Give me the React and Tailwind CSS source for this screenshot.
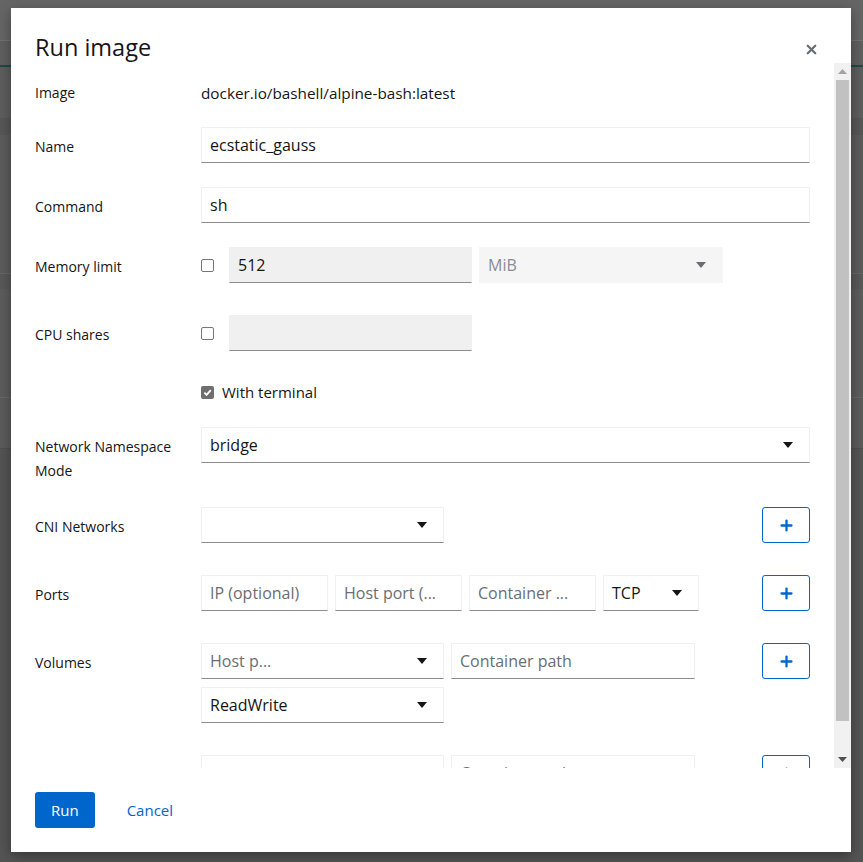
import { X, Plus } from 'lucide-react';

const font = { fontFamily: '"Open Sans", "Noto Sans", sans-serif' };

function Caret({ className = 'fill-[#151515]' }) {
    return (
        <svg width="10" height="6" viewBox="0 0 10 6" className={className}>
            <polygon points="0,0 10,0 5,6" />
        </svg>
    );
}

function Checkbox({ checked }) {
    if (checked) {
        return (
            <span className="w-[13px] h-[13px] rounded-[2px] bg-[#6f6f6f] flex items-center justify-center shrink-0">
                <svg width="9" height="9" viewBox="0 0 10 10">
                    <path d="M1.5 5.2 L4 7.6 L8.6 2.4" stroke="white" strokeWidth="2" fill="none" />
                </svg>
            </span>
        );
    }
    return <span className="w-[13px] h-[13px] rounded-[2px] border border-[#767676] bg-white shrink-0" />;
}

function Input({ value, placeholder, className = '', disabled }) {
    return (
        <div
            className={`h-9 flex items-center px-2 text-base border border-[#f0f0f0] border-b-[#8a8d90] ${
                disabled ? 'bg-[#f0f0f0]' : 'bg-white'
            } ${className}`}
        >
            {value ? (
                <span className="text-[#151515] truncate">{value}</span>
            ) : (
                <span className="text-[#6a6e73] truncate">{placeholder}</span>
            )}
        </div>
    );
}

function Select({ value, placeholder, className = '', disabled }) {
    return (
        <div
            className={`h-9 flex items-center justify-between pl-2 pr-4 text-base border ${
                disabled ? 'bg-[#f5f5f5] border-[#f5f5f5]' : 'bg-white border-[#f0f0f0] border-b-[#8a8d90]'
            } ${className}`}
        >
            <span className={disabled ? 'text-[#8a8d90]' : value ? 'text-[#151515]' : 'text-[#6a6e73]'}>
                {value || placeholder}
            </span>
            <Caret className={disabled ? 'fill-[#6a6e73]' : 'fill-[#151515]'} />
        </div>
    );
}

function AddButton() {
    return (
        <button className="w-12 h-9 ml-auto flex items-center justify-center border border-[#0066cc] rounded-[3px] text-[#0066cc] shrink-0">
            <Plus size={17} strokeWidth={3.2} />
        </button>
    );
}

function Row({ label, className = '', children }) {
    return (
        <div className={`flex ${className}`}>
            <div className="w-[166px] shrink-0 pt-2 text-sm font-medium leading-6 text-[#151515]">{label}</div>
            <div className="flex-1 min-w-0">{children}</div>
        </div>
    );
}

function Backdrop() {
    return (
        <div className="flex flex-col">
            <div className="h-[40px] bg-[#656565]" />
            <div className="h-px bg-[#727272]" />
            <div className="h-[24px] bg-[#5f5f5f]" />
            <div className="h-[2px] bg-[#1c4a47]" />
            <div className="h-[51px] bg-[#5d5d5d]" />
            <div className="h-[17px] bg-[#575757]" />
            <div className="h-[138px] bg-[#5c5c5c]" />
            <div className="h-px bg-[#676767]" />
            <div className="h-[15px] bg-[#585858]" />
            <div className="h-[108px] bg-[#5c5c5c]" />
            <div className="h-px bg-[#676767]" />
            <div className="h-[50px] bg-[#5b5b5b]" />
            <div className="h-px bg-[#4f4f4f]" />
            <div className="h-[414px] bg-[#545454]" />
        </div>
    );
}

export default function App() {
    return (
        <div className="relative w-full h-[862px] overflow-hidden" style={font}>
            <Backdrop />

            {/* Modal */}
            <div className="absolute left-[11px] top-[8px] w-[840px] h-[844px] bg-white flex flex-col shadow-[0_4px_12px_rgba(0,0,0,0.35)]">
                {/* Header */}
                <div className="relative pl-6 pt-6">
                    <h1 className="text-[23.5px] leading-[31px] text-[#151515]">Run image</h1>
                    <button className="absolute right-[32px] top-[34px] text-[#6a6e73]">
                        <X size={15} strokeWidth={3.6} />
                    </button>
                </div>

                {/* Body */}
                <div className="flex flex-1 min-h-0">
                    <div className="flex-1 overflow-hidden pl-6 pr-[24px]">
                        <Row label="Image" className="mt-[10px]">
                            <div className="h-9 pt-2 text-[15.3px] leading-6 text-[#151515]">docker.io/bashell/alpine-bash:latest</div>
                        </Row>

                        <Row label="Name" className="mt-[18px]">
                            <Input value="ecstatic_gauss" />
                        </Row>

                        <Row label="Command" className="mt-6">
                            <Input value="sh" />
                        </Row>

                        <Row label="Memory limit" className="mt-6">
                            <div className="flex items-center">
                                <Checkbox />
                                <Input value="512" disabled className="w-[243px] ml-[15px]" />
                                <Select value="MiB" disabled className="w-[244px] ml-[7px]" />
                            </div>
                        </Row>

                        <Row label="CPU shares" className="mt-8">
                            <div className="flex items-center">
                                <Checkbox />
                                <Input value="" disabled className="w-[243px] ml-[15px]" />
                            </div>
                        </Row>

                        <Row label="" className="mt-8">
                            <div className="flex items-center h-[18px] gap-2 text-[15px] text-[#151515]">
                                <Checkbox checked />
                                <span>With terminal</span>
                            </div>
                        </Row>

                        <Row label={<>Network Namespace<br />Mode</>} className="mt-[26px]">
                            <Select value="bridge" />
                        </Row>

                        <Row label="CNI Networks" className="mt-6">
                            <div className="flex">
                                <Select className="w-[243px]" />
                                <AddButton />
                            </div>
                        </Row>

                        <Row label="Ports" className="mt-8">
                            <div className="flex gap-[7px]">
                                <Input placeholder="IP (optional)" className="w-[127px]" />
                                <Input placeholder="Host port (..." className="w-[127px]" />
                                <Input placeholder="Container ..." className="w-[127px]" />
                                <Select value="TCP" className="w-[96px]" />
                                <AddButton />
                            </div>
                        </Row>

                        <Row label="Volumes" className="mt-8">
                            <div className="flex flex-col gap-2">
                                <div className="flex gap-[7px]">
                                    <Select placeholder="Host p..." className="w-[243px]" />
                                    <Input placeholder="Container path" className="w-[244px]" />
                                    <AddButton />
                                </div>
                                <Select value="ReadWrite" className="w-[243px]" />
                            </div>
                        </Row>

                        <Row label="" className="mt-8">
                            <div className="flex gap-[7px]">
                                <Select placeholder="" className="w-[243px]" />
                                <Input placeholder="Container path" className="w-[244px]" />
                                <AddButton />
                            </div>
                        </Row>
                    </div>

                    {/* Scrollbar */}
                    <div className="w-[17px] bg-[#f1f1f1] flex flex-col items-center shrink-0">
                        <div className="h-[17px] flex items-center justify-center">
                            <svg width="9" height="5" viewBox="0 0 9 5" className="fill-[#a3a3a3]">
                                <polygon points="0,5 9,5 4.5,0" />
                            </svg>
                        </div>
                        <div className="w-[13px] h-[641px] bg-[#c1c1c1]" />
                        <div className="flex-1" />
                        <div className="h-[17px] flex items-center justify-center">
                            <svg width="9" height="5" viewBox="0 0 9 5" className="fill-[#505050]">
                                <polygon points="0,0 9,0 4.5,5" />
                            </svg>
                        </div>
                    </div>
                </div>

                {/* Footer */}
                <div className="flex items-center gap-4 px-6 pt-6 pb-6">
                    <button className="h-9 px-4 rounded-[3px] bg-[#0066cc] text-white text-[15px]">Run</button>
                    <button className="h-9 px-4 text-[#0066cc] text-[15px]">Cancel</button>
                </div>
            </div>
        </div>
    );
}
